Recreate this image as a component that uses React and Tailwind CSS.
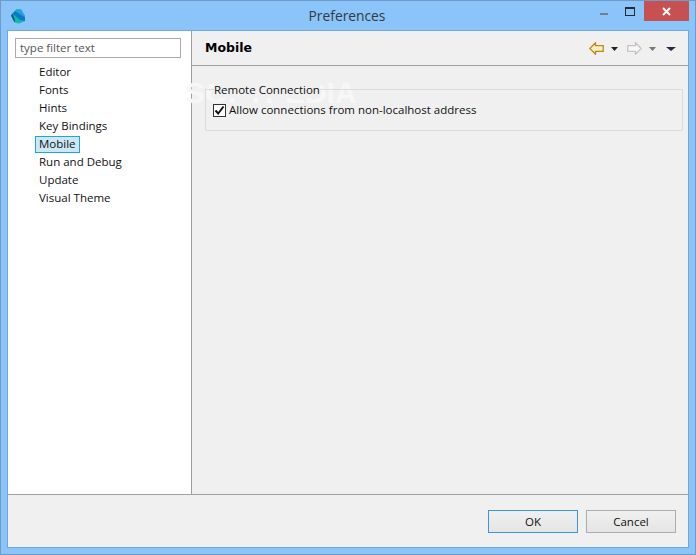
import React from "react";

const items = ["Editor", "Fonts", "Hints", "Key Bindings", "Mobile", "Run and Debug", "Update", "Visual Theme"];

function Logo() {
  return (
    <svg width="16" height="17" viewBox="0 0 16 17" className="block">
      <path d="M1 7.5 L6.5 1 L11 1.5 L15 8 L15 13 L9 15.5 L4.5 14.5 Z" fill="#12b8ac" />
      <path d="M2.5 5.5 L5 3 L15 9 L15 13 L10 12 Z" fill="#0b78c8" />
      <path d="M1 7.5 L2.5 5.5 L5 12 L4.5 14.5 Z" fill="#125a8c" />
      <path d="M11 1.5 L15 8 L15 9 L8 5 L7 2 Z" fill="#2a9be6" />
    </svg>
  );
}

function Arrow({ dir, active }) {
  const d = dir === "left"
    ? "M0.8 6.5 L6.5 0.8 L6.5 3.7 L14.2 3.7 L14.2 9.3 L6.5 9.3 L6.5 12.2 Z"
    : "M14.2 6.5 L8.5 0.8 L8.5 3.7 L0.8 3.7 L0.8 9.3 L8.5 9.3 L8.5 12.2 Z";
  return (
    <svg width="15" height="13" viewBox="0 0 15 13" className="block">
      <path d={d} fill={active ? "#fff0c0" : "#f7f7f7"} stroke={active ? "#c08518" : "#c4c4c4"} strokeWidth="1.3" />
    </svg>
  );
}

function Tri({ color, w = 7 }) {
  return (
    <svg width={w} height="4" viewBox={`0 0 ${w} 4`} className="block">
      <path d={`M0 0 L${w} 0 L${w / 2} 4 Z`} fill={color} />
    </svg>
  );
}

export default function App() {
  return (
    <div className="w-[696px] h-[555px] bg-[#8ac4f8] border border-[#6d9ccb] flex flex-col overflow-hidden text-[11.5px] text-[#111] font-['Open_Sans','Noto_Sans',sans-serif]">
      <div className="h-[29px] flex items-center relative shrink-0">
        <div className="pl-[9px] pt-px"><Logo /></div>
        <div className="absolute inset-x-0 top-[6px] pr-[2px] text-center text-[13.8px] leading-[18px] text-[#333a42]">Preferences</div>
        <div className="ml-auto flex items-start h-full pr-[6px]">
          <div className="w-[8px] h-[2px] bg-[#6e7f92] mt-[12px] mr-[17px]"></div>
          <div className="w-[8px] h-[6px] border border-[#222c36] border-t-2 box-content mt-[6px] mr-[9px]"></div>
          <div className="w-[45px] h-[20px] bg-[#c75050] flex items-center justify-center">
            <svg width="9" height="9" viewBox="0 0 9 9"><path d="M1 1 L8 8 M8 1 L1 8" stroke="#fff" strokeWidth="2" /></svg>
          </div>
        </div>
      </div>

      <div className="mx-[6px] flex-1 flex flex-col border border-[#6fa8de] bg-[#f0f0f0] min-h-0">
        <div className="flex-1 flex min-h-0">
          <div className="w-[184px] bg-white border-r border-[#a0a0a0] shrink-0 pl-[7px] pt-[7px]">
            <div className="w-[166px] h-[20px] border border-[#a9a9a9] pl-[4px] leading-[18px] text-[#555]">type filter text</div>
            <div className="mt-[6px] flex flex-col">
              {items.map((t) =>
                t === "Mobile" ? (
                  <div key={t} className="h-[18px] flex items-start">
                    <span className="ml-[20px] pl-[3px] w-[45px] h-[17px] leading-[14px] border border-[#26a0da] bg-[#cbe8f6]">{t}</span>
                  </div>
                ) : (
                  <div key={t} className="h-[18px] leading-[16px] pl-[24px]">{t}</div>
                )
              )}
            </div>
          </div>

          <div className="flex-1 flex flex-col min-w-0 relative">
            <div className="h-[35px] border-b border-[#a0a0a0] flex items-center pl-[13px] pr-[12px] shrink-0">
              <span className="font-['DejaVu_Sans',sans-serif] font-bold text-[12.5px] text-black pt-px">Mobile</span>
              <div className="ml-auto flex items-center pt-px">
                <Arrow dir="left" active />
                <div className="ml-[7px]"><Tri color="#222" /></div>
                <div className="ml-[9px]"><Arrow dir="right" /></div>
                <div className="ml-[7px]"><Tri color="#777" /></div>
                <div className="ml-[10px]"><Tri color="#2c2748" w="10" /></div>
              </div>
            </div>
            <div className="absolute left-[-7px] top-[44px] text-[30px] leading-[36px] font-bold text-[#f7f7f7] font-['Liberation_Sans',sans-serif]">SOFTPEDIA</div>
            <div className="relative pl-[13px] pr-[5px] pt-[23px]">
              <div className="border border-[#dcdcdc] h-[42px] relative pl-[7px]">
                <div className="absolute left-[8px] top-[-8px] leading-[16px] bg-[#f0f0f0]">Remote Connection</div>
                <div className="flex items-center pt-[12px]">
                  <div className="w-[13px] h-[13px] border border-[#333] bg-white flex items-center justify-center shrink-0">
                    <svg width="11" height="11" viewBox="0 0 11 11"><path d="M1.5 5.5 L4.2 8.5 L9.5 1.5" fill="none" stroke="#111" strokeWidth="2" /></svg>
                  </div>
                  <span className="ml-[3px] leading-[16px]">Allow connections from non-localhost address</span>
                </div>
              </div>
            </div>
          </div>
        </div>
        <div className="h-[53px] border-t border-[#a0a0a0] flex items-start justify-end pr-[12px] pt-[15px] shrink-0">
          <div className="w-[90px] h-[23px] border border-[#3c94e8] bg-gradient-to-b from-[#f0f0f0] to-[#e5e5e5] text-center leading-[21px]">OK</div>
          <div className="w-[90px] h-[23px] ml-[8px] border border-[#acacac] bg-gradient-to-b from-[#f0f0f0] to-[#e5e5e5] text-center leading-[21px]">Cancel</div>
        </div>
      </div>
      <div className="h-[6px] shrink-0"></div>
    </div>
  );
}
